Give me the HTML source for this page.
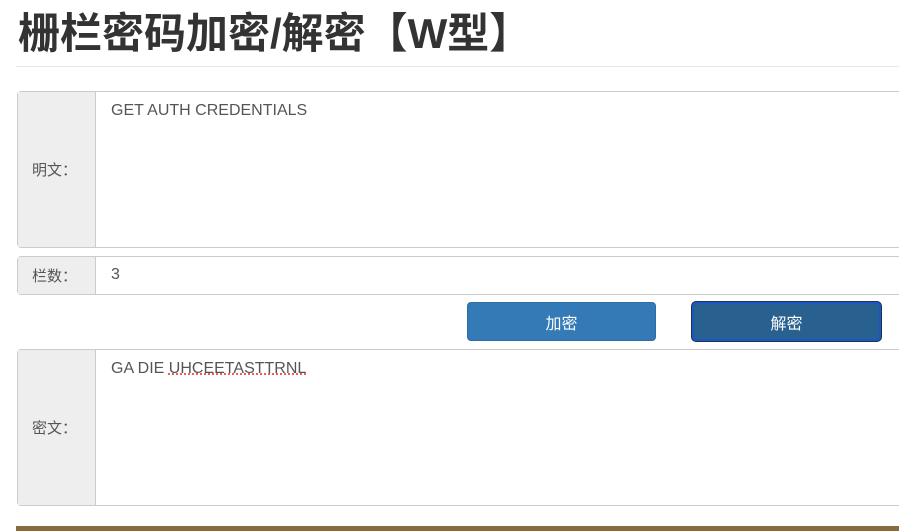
<!DOCTYPE html>
<html><head><meta charset="utf-8"><style>
body{margin:0;width:899px;height:531px;overflow:hidden;background:#fff;font-family:"Liberation Sans","Noto Sans CJK SC",sans-serif;position:relative}
h1{position:absolute;left:18px;top:6px;margin:0;font-size:42px;font-weight:bold;color:#333;line-height:56px}
.hr{position:absolute;left:16px;right:0;top:66px;border-top:1px solid #e8e8e8}
.box{position:absolute;left:17px;width:900px;border:1px solid #ccc;border-radius:4px;background:#fff;box-sizing:border-box}
.lab{position:absolute;left:0;top:0;bottom:0;width:78px;background:#eee;border-right:1px solid #ccc;font-size:15px;color:#555;display:flex;align-items:center;padding-left:14px;box-sizing:border-box}
.val{position:absolute;left:93px;font-size:16px;color:#555}
.btn{position:absolute;top:302px;height:39px;width:189px;border-radius:4px;color:#fff;font-size:16px;display:flex;align-items:center;justify-content:center;box-sizing:border-box}
.strip{position:absolute;left:16px;right:0;top:526px;height:5px;background:#8a6a3c}
</style></head><body>
<h1>栅栏密码加密/解密【W型】</h1>
<div class="hr"></div>
<div class="box" style="top:91px;height:157px"><div class="lab">明文：</div><div class="val" style="top:10px">GET AUTH CREDENTIALS</div></div>
<div class="box" style="top:256px;height:39px"><div class="lab">栏数：</div><div class="val" style="top:9px">3</div></div>
<div class="btn" style="left:467px;background:#337ab7;border:1px solid #2e6da4">加密</div>
<div class="btn" style="left:692px;background:#286090;border:2px solid #1a56c8;box-shadow:0 0 0 1px #234">解密</div>
<div class="box" style="top:349px;height:157px"><div class="lab">密文：</div><div class="val" style="top:10px">GA DIE <span style="text-decoration:underline dotted #e33">UHCEETASTTRNL</span></div></div>
<div class="strip"></div>
</body></html>
